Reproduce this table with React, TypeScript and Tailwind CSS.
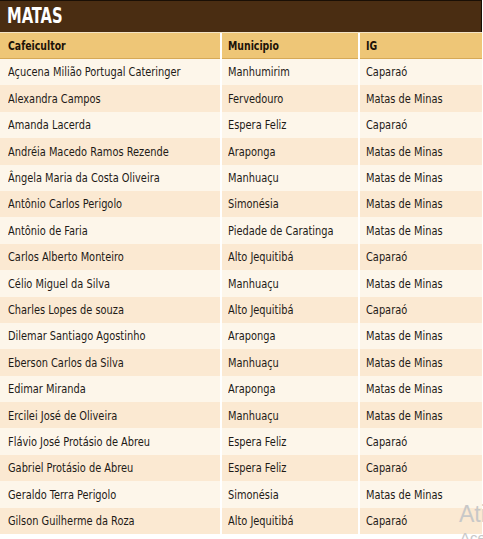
import React from "react";

const rows: [string, string, string][] = [
  ["Açucena Milião Portugal Cateringer", "Manhumirim", "Caparaó"],
  ["Alexandra Campos", "Fervedouro", "Matas de Minas"],
  ["Amanda Lacerda", "Espera Feliz", "Caparaó"],
  ["Andréia Macedo Ramos Rezende", "Araponga", "Matas de Minas"],
  ["Ângela Maria da Costa Oliveira", "Manhuaçu", "Matas de Minas"],
  ["Antônio Carlos Perigolo", "Simonésia", "Matas de Minas"],
  ["Antônio de Faria", "Piedade de Caratinga", "Matas de Minas"],
  ["Carlos Alberto Monteiro", "Alto Jequitibá", "Caparaó"],
  ["Célio Miguel da Silva", "Manhuaçu", "Matas de Minas"],
  ["Charles Lopes de souza", "Alto Jequitibá", "Caparaó"],
  ["Dilemar Santiago Agostinho", "Araponga", "Matas de Minas"],
  ["Eberson Carlos da Silva", "Manhuaçu", "Matas de Minas"],
  ["Edimar Miranda", "Araponga", "Matas de Minas"],
  ["Ercilei José de Oliveira", "Manhuaçu", "Matas de Minas"],
  ["Flávio José Protásio de Abreu", "Espera Feliz", "Caparaó"],
  ["Gabriel Protásio de Abreu", "Espera Feliz", "Caparaó"],
  ["Geraldo Terra Perigolo", "Simonésia", "Matas de Minas"],
  ["Gilson Guilherme da Roza", "Alto Jequitibá", "Caparaó"],
];

const font = {
  fontFamily: "'DejaVu Sans Condensed','DejaVu Sans','Liberation Sans',sans-serif",
};

function T({ children, bold }: { children: React.ReactNode; bold?: boolean }) {
  return (
    <span
      className={`inline-block whitespace-nowrap origin-left ${bold ? "font-bold scale-x-[0.8]" : "scale-x-[0.84]"}`}
    >
      {children}
    </span>
  );
}

export default function App() {
  return (
    <div className="relative w-[483px] h-[539px] bg-white overflow-hidden" style={font}>
      <div className="w-[482px]">
        <div className="h-[32px] bg-[#4a2d12] border-t border-r border-[#1a0f05] flex items-center pl-[7px]">
          <span className="inline-block origin-left scale-x-[0.78] text-white font-bold text-[21px] leading-none">MATAS</span>
        </div>
        <div className="h-[1px] bg-[#f3e3c4]" />
        <div className="grid grid-cols-[220px_136px_122px] gap-x-[2px] bg-white">
          <div className="h-[26px] bg-[#eec677] border-b border-[#d6a957] flex items-center pl-[8px] text-[13px] text-[#1c1208]"><T bold>Cafeicultor</T></div>
          <div className="h-[26px] bg-[#eec677] border-b border-[#d6a957] flex items-center pl-[6px] text-[13px] text-[#1c1208]"><T bold>Municipio</T></div>
          <div className="h-[26px] bg-[#eec677] border-b border-[#d6a957] flex items-center pl-[6px] text-[13px] text-[#1c1208]"><T bold>IG</T></div>
          {rows.map((r, i) => {
            const bg = i % 2 === 0 ? "bg-[#fdf6ea]" : "bg-[#fbe9d2]";
            return (
              <React.Fragment key={i}>
                <div className={`h-[26.4px] ${bg} flex items-center pl-[8px] text-[13px] text-[#1e1a16]`}><T>{r[0]}</T></div>
                <div className={`h-[26.4px] ${bg} flex items-center pl-[6px] text-[13px] text-[#1e1a16]`}><T>{r[1]}</T></div>
                <div className={`h-[26.4px] ${bg} flex items-center pl-[6px] text-[13px] text-[#1e1a16]`}><T>{r[2]}</T></div>
              </React.Fragment>
            );
          })}
        </div>
      </div>
      <div
        className="absolute left-[459px] top-[503px] text-[23px] leading-none text-[#c8c8c8] whitespace-nowrap"
        style={{ fontFamily: "'Liberation Sans','DejaVu Sans',sans-serif" }}
      >
        Ativar o Windows
      </div>
      <div
        className="absolute left-[460px] top-[530px] text-[15px] leading-none text-[#c8c8c8] whitespace-nowrap"
        style={{ fontFamily: "'Liberation Sans','DejaVu Sans',sans-serif" }}
      >
        Acesse Configurações
      </div>
    </div>
  );
}
